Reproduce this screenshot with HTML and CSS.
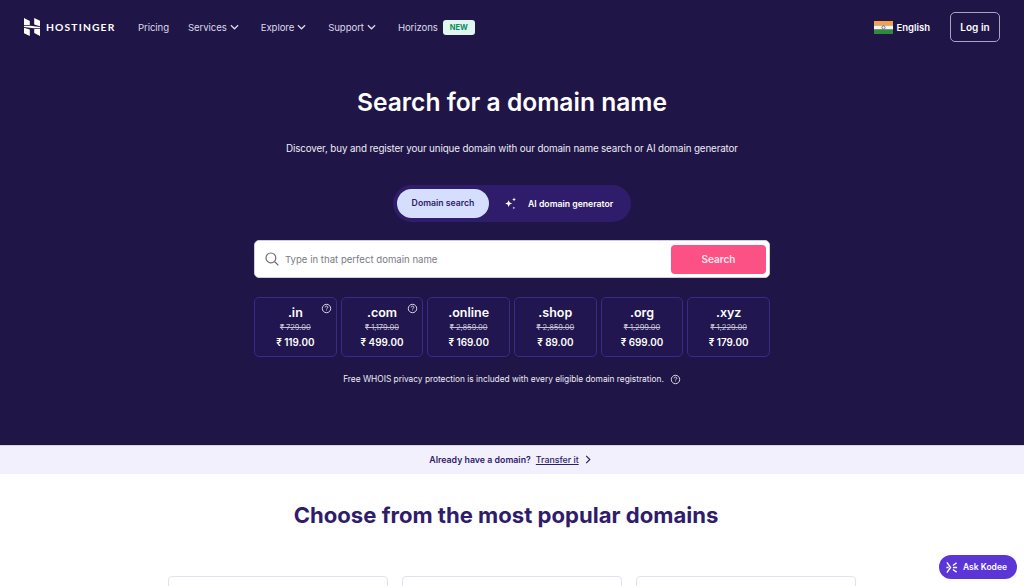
FILE: index.html
```html
<!DOCTYPE html>
<html lang="en">
<head>
<meta charset="utf-8">
<title>Search for a domain name</title>
<link rel="stylesheet" href="styles.css">
</head>
<body>
<section class="hero">
  <header class="topbar">
    <a class="logo">
      <svg class="logo-mark" viewBox="0 0 16 18" aria-hidden="true"><path fill="#fff" d="M0 0l5.800 3v4H0zM10.200 0L16 2.800v5.400l-5.800-1.800zM0 9.800l5.800 1.800V18L0 15.200zM10.200 11H16v7l-5.800-2.900zM0 7.700h6.200l9.800 1.300v1.300H9.800L0 9z"/></svg>
      <span class="logo-text">HOSTINGER</span>
    </a>
    <nav class="nav">
      <a class="nav-item">Pricing</a>
      <a class="nav-item has-menu">Services<svg class="chev" viewBox="0 0 10 6"><path d="M1 1l4 4 4-4"/></svg></a>
      <a class="nav-item has-menu">Explore<svg class="chev" viewBox="0 0 10 6"><path d="M1 1l4 4 4-4"/></svg></a>
      <a class="nav-item has-menu">Support<svg class="chev" viewBox="0 0 10 6"><path d="M1 1l4 4 4-4"/></svg></a>
      <a class="nav-item horizons">Horizons<span class="badge">NEW</span></a>
    </nav>
    <div class="top-right">
      <a class="lang">
        <svg class="flag" viewBox="0 0 19 13" aria-hidden="true"><rect width="19" height="4.400" fill="#f4a14a"/><rect y="4.400" width="19" height="4.200" fill="#f5f5f0"/><rect y="8.600" width="19" height="4.400" fill="#2f8a3a"/><circle cx="9.500" cy="6.500" r="1.600" fill="none" stroke="#3a4a8a" stroke-width=".7"/></svg>
        English
      </a>
      <a class="login">Log in</a>
    </div>
  </header>

  <div class="hero-body">
    <h1 class="title">Search for a domain name</h1>
    <p class="subtitle">Discover, buy and register your unique domain with our domain name search or AI domain generator</p>
    <div class="tabs">
      <span class="tab active">Domain search</span>
      <span class="tab ai">
        <svg class="sparkle" viewBox="0 0 14 14" aria-hidden="true"><path fill="#fff" d="M5 3.400l1.100 2.600L8.800 7 6.100 8.100 5 10.800 3.900 8.100 1.200 7l2.700-1zM10.800.6l.6 1.500 1.500.6-1.500.6-.6 1.500-.6-1.500-1.500-.6 1.500-.6zM10.600 10.400l.4 1 1 .4-1 .4-.4 1-.4-1-1-.4 1-.4z"/></svg>
        AI domain generator
      </span>
    </div>
    <div class="search">
      <svg class="search-icon" viewBox="0 0 14 14" aria-hidden="true"><circle cx="5.900" cy="5.900" r="4.900"/><path d="M9.500 9.500l3.900 3.900"/></svg>
      <span class="placeholder">Type in that perfect domain name</span>
      <button class="search-btn">Search</button>
    </div>
    <div class="prices">
      <div class="price-card"><svg class="help corner" viewBox="0 0 12 12"><circle cx="6" cy="6" r="4.600"/><path d="M4.600 4.800a1.400 1.400 0 1 1 2.200 1.100c-.5.3-.8.6-.8 1.100"/><path d="M6 8.300v.4"/></svg><span class="tld">.in</span><s class="old">₹ 729.00</s><span class="now">₹ 119.00</span></div>
      <div class="price-card"><svg class="help corner" viewBox="0 0 12 12"><circle cx="6" cy="6" r="4.600"/><path d="M4.600 4.800a1.400 1.400 0 1 1 2.200 1.100c-.5.3-.8.6-.8 1.100"/><path d="M6 8.300v.4"/></svg><span class="tld">.com</span><s class="old">₹ 1,179.00</s><span class="now">₹ 499.00</span></div>
      <div class="price-card"><span class="tld">.online</span><s class="old">₹ 2,859.00</s><span class="now">₹ 169.00</span></div>
      <div class="price-card"><span class="tld">.shop</span><s class="old">₹ 2,859.00</s><span class="now">₹ 89.00</span></div>
      <div class="price-card"><span class="tld">.org</span><s class="old">₹ 1,299.00</s><span class="now">₹ 699.00</span></div>
      <div class="price-card"><span class="tld">.xyz</span><s class="old">₹ 1,229.00</s><span class="now">₹ 179.00</span></div>
    </div>
    <p class="note">Free WHOIS privacy protection is included with every eligible domain registration.<svg class="help" viewBox="0 0 12 12"><circle cx="6" cy="6" r="4.600"/><path d="M4.600 4.800a1.400 1.400 0 1 1 2.200 1.100c-.5.3-.8.6-.8 1.100"/><path d="M6 8.300v.4"/></svg></p>
  </div>
</section>

<div class="transfer">
  <span class="transfer-q">Already have a domain?</span>
  <a class="transfer-link">Transfer it</a>
  <svg class="transfer-chev" viewBox="0 0 6 10"><path d="M1 1l4 4-4 4"/></svg>
</div>

<section class="popular">
  <h2 class="popular-title">Choose from the most popular domains</h2>
  <div class="popular-grid">
    <div class="popular-card"></div>
    <div class="popular-card"></div>
    <div class="popular-card"></div>
  </div>
</section>

<a class="kodee">
  <svg class="kodee-icon" viewBox="0 0 14 14" aria-hidden="true"><path d="M2 1.500L6 7l-4 5.500M1.500 7H4M8.500 7H13M8.500 4.800L12.500 2M8.500 9.200l4 2.800"/></svg>
  Ask Kodee
</a>
</body>
</html>
```
FILE: styles.css
```css
* { box-sizing: border-box; }
html, body { margin: 0; padding: 0; height: 586px; overflow: hidden; background: #fff; }
body { font-family: "Inter", "Noto Sans", "DejaVu Sans", sans-serif; color: #fff; }
p, h1, h2 { margin: 0; }

.hero { background: #1f1547; height: 445px; }

.topbar { display: flex; align-items: center; height: 54px; padding: 0 24px; }
.logo { display: flex; align-items: center; gap: 6px; width: 114px; }
.logo-mark { width: 16px; height: 18px; flex: none; }
.logo-text { font-family: "Lato", sans-serif; font-weight: 700; font-size: 10.300px; letter-spacing: 1.150px; }
.nav { display: flex; align-items: center; gap: 19px; font-size: 9.600px; letter-spacing: -.08px; color: #ddd9ea; }
.nav-item { display: flex; align-items: center; gap: 3px; white-space: nowrap; }
.has-menu { padding-right: 3px; }
.chev { width: 9px; height: 6px; fill: none; stroke: #ddd9ea; stroke-width: 1.400; }
.horizons { gap: 5px; }
.badge { width: 32px; text-align: center; background: #dff7ef; color: #0c8a5f; font-size: 7.500px; font-weight: 700; letter-spacing: 0; height: 15px; line-height: 15px; border-radius: 3px; }
.top-right { margin-left: auto; display: flex; align-items: center; gap: 20px; }
.lang { display: flex; align-items: center; gap: 3px; font-size: 9.500px; font-weight: 600; }
.flag { width: 19px; height: 13px; }
.login { display: flex; align-items: center; justify-content: center; width: 50px; height: 30px; border: 1.500px solid #a9a4c4; border-radius: 5px; font-size: 10px; font-weight: 600; }

.hero-body { display: flex; flex-direction: column; align-items: center; }
.title { margin-top: 33px; font-size: 24.600px; line-height: 30px; font-weight: 600; }
.subtitle { margin-top: 25px; font-size: 9.800px; letter-spacing: -.13px; line-height: 14px; color: #eeecf5; }
.tabs { margin-top: 29px; display: flex; align-items: center; width: 238px; height: 37px; padding: 0 4px; border-radius: 19px; background: #2f1c6a; }
.tab { font-size: 8.700px; font-weight: 600; white-space: nowrap; }
.tab.active { width: 92px; height: 29px; line-height: 29px; text-align: center; border-radius: 15px; background: #d5dffd; color: #2f1c6a; }
.tab.ai { display: flex; align-items: center; gap: 11px; margin-left: 15px; }
.sparkle { width: 13px; height: 13px; }

.search { margin-top: 18px; width: 516px; height: 38px; display: flex; align-items: center; padding: 0 3px 0 10px; background: #fff; border: 1px solid #cfcbe0; border-radius: 5px; }
.search-icon { width: 14px; height: 14px; fill: none; stroke: #6d6d78; stroke-width: 1.200; }
.placeholder { margin-left: 6px; font-size: 9.600px; color: #7b7b85; }
.search-btn { margin-left: auto; width: 95px; height: 29px; border: 0; border-radius: 4px; background: #fc5185; color: #fde4ec; font: 600 10px "Inter", sans-serif; }

.prices { margin-top: 19px; width: 516px; display: grid; grid-template-columns: repeat(6, 1fr); gap: 4px; }
.price-card { position: relative; height: 60px; display: flex; flex-direction: column; align-items: center; border: 1px solid #3a2a8c; border-radius: 5px; background: #21164f; }
.tld { margin-top: 7px; font-size: 12.500px; line-height: 16px; font-weight: 600; }
.old { margin-top: 2px; font-size: 7.500px; line-height: 10px; color: #c9c5d8; }
.now { margin-top: 2px; font-size: 9.900px; line-height: 14px; font-weight: 600; }
.help { width: 11px; height: 11px; fill: none; stroke: #e8e6f0; stroke-width: 1; }
.help.corner { position: absolute; top: 5px; right: 4px; }

.note { margin-top: 15px; display: flex; align-items: center; gap: 6px; font-size: 8.330px; line-height: 14px; color: #eeecf5; }

.transfer { height: 29px; display: flex; align-items: center; justify-content: center; gap: 5px; padding: 0 4px 2px 0; background: #f2f0fc; border-top: 1px solid #d8d4ec; font-size: 8.800px; color: #2f1c6a; font-weight: 600; }
.transfer-link { font-weight: 500; text-decoration: underline; }
.transfer-chev { width: 6px; height: 9px; margin-left: 1px; fill: none; stroke: #2f1c6a; stroke-width: 1.300; }

.popular { background: #fff; display: flex; flex-direction: column; align-items: center; }
.popular-title { margin-top: 27px; padding-right: 12px; font-size: 22.100px; line-height: 28px; font-weight: 700; color: #2f1c6a; }
.popular-grid { margin-top: 47px; display: flex; gap: 14px; }
.popular-card { width: 220px; height: 200px; border: 1px solid #e3e1f0; border-radius: 4px; }

.kodee { position: fixed; left: 939px; top: 555px; width: 78px; height: 24px; display: flex; align-items: center; gap: 5px; padding-left: 6px; border-radius: 12px; background: #5c35d6; font-size: 8.500px; font-weight: 600; color: #fff; }
.kodee-icon { width: 13px; height: 13px; fill: none; stroke: #fff; stroke-width: 1.500; }
```
